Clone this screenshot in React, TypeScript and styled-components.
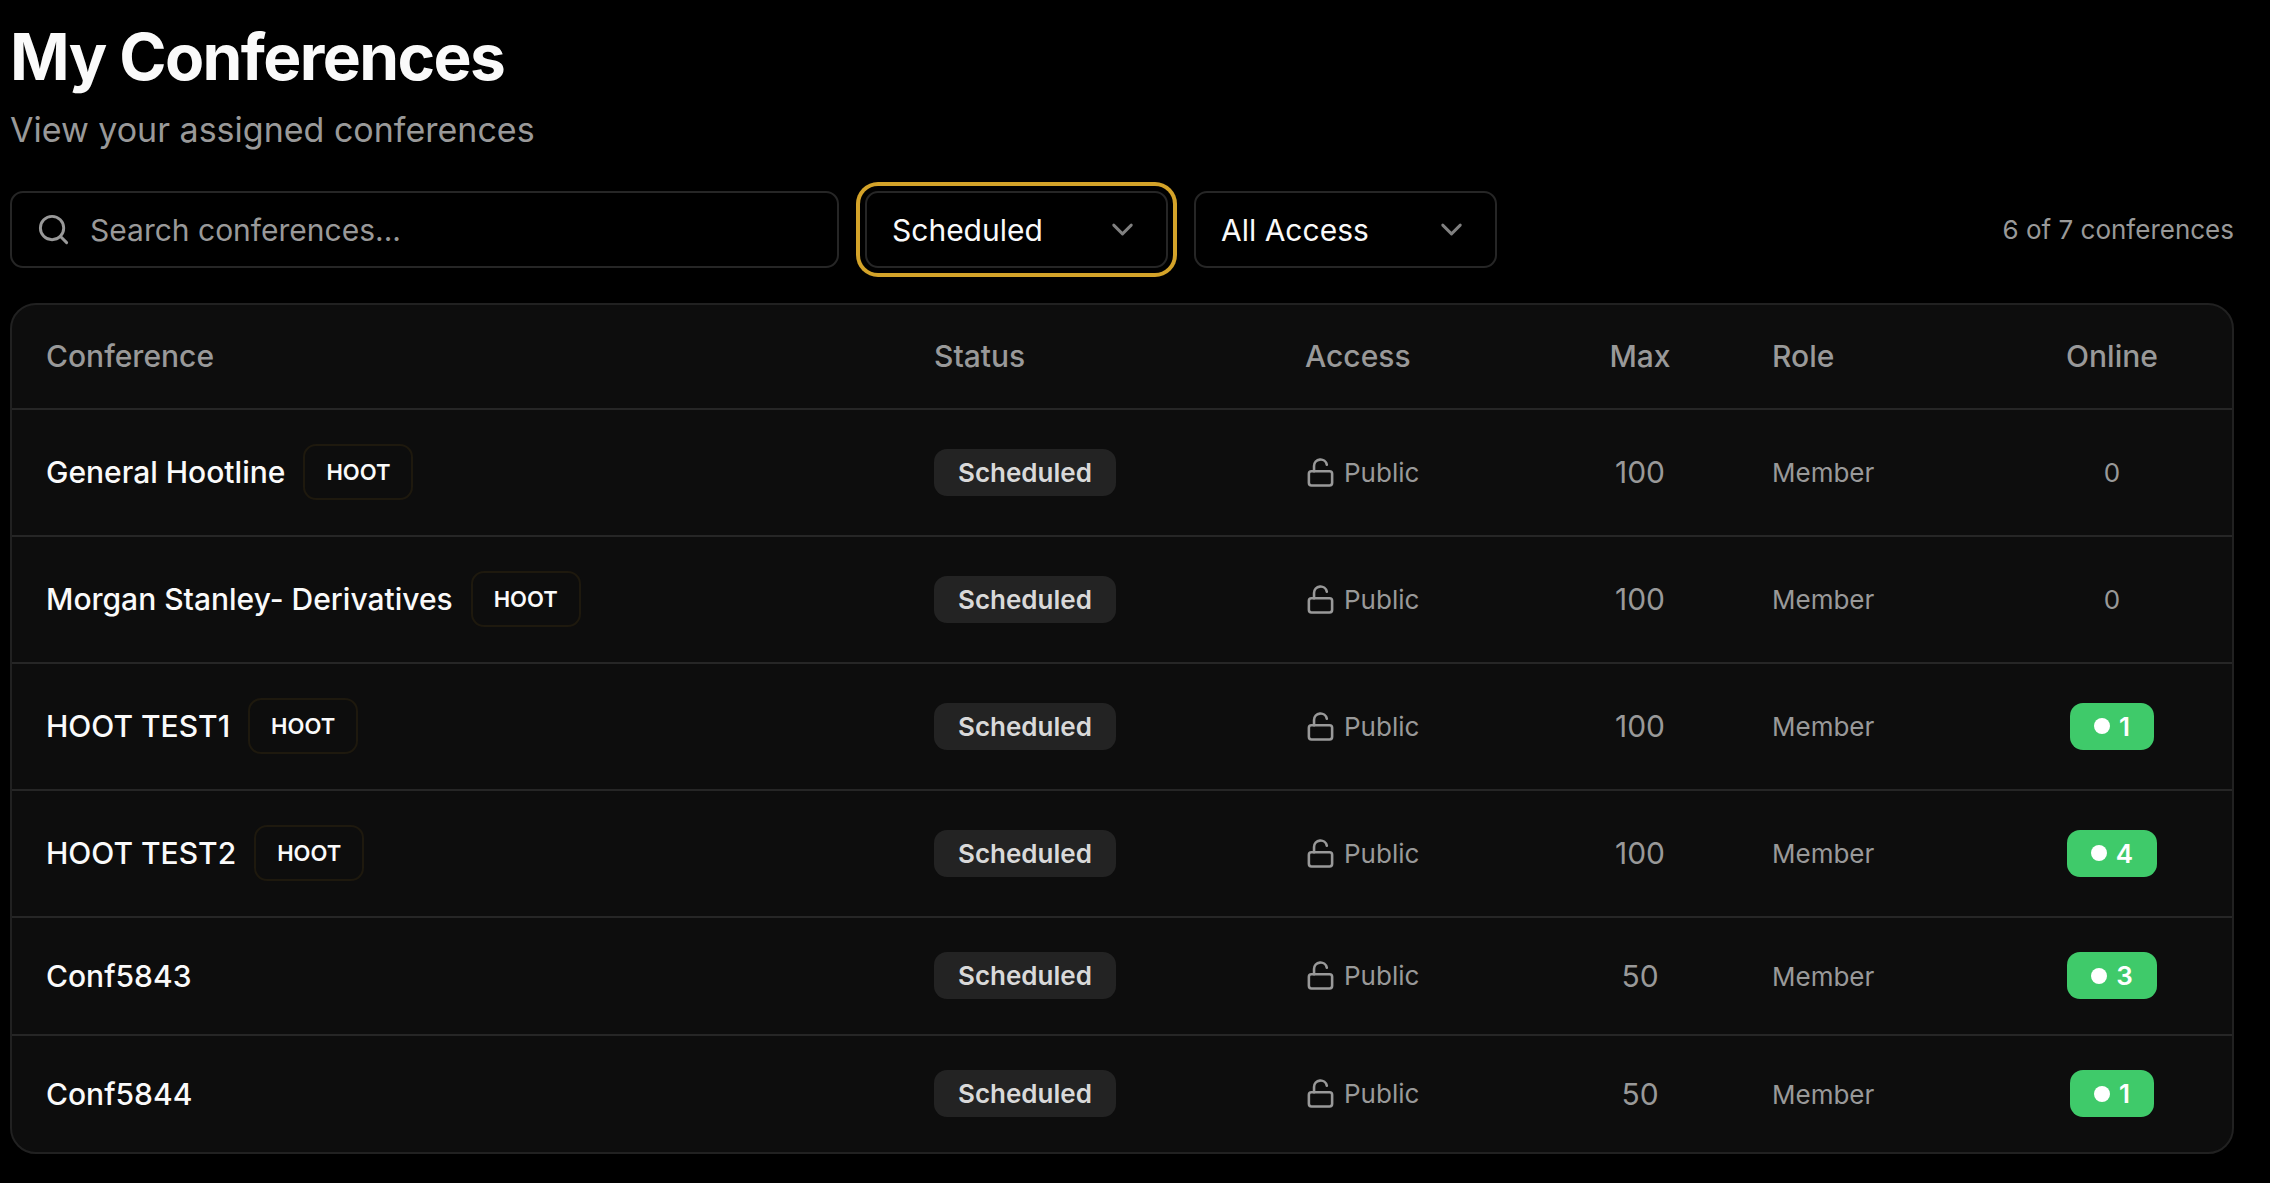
import React, { useState } from "react";
import styled, { createGlobalStyle, css } from "styled-components";
import { ChevronDown, LockOpen, Search } from "lucide-react";

const color = {
  page: "#000000",
  card: "#0d0d0d",
  border: "#262626",
  cardBorder: "#212121",
  text: "#fafafa",
  muted: "#999999",
  badge: "#232323",
  badgeText: "#d9d9d9",
  green: "#3fca6a",
  gold: "#d4a329",
};

const GlobalStyle = createGlobalStyle`
  *, *::before, *::after { box-sizing: border-box; }
  body {
    margin: 0;
    background: ${color.page};
    color: ${color.text};
    font-family: Inter, "Liberation Sans", sans-serif;
    font-size: 30px;
    line-height: 44px;
  }
`;

const Page = styled.main`
  display: flex;
  flex-direction: column;
  gap: 35px;
  padding: 18px 36px 28px 10px;
`;

const Header = styled.header`
  display: flex;
  flex-direction: column;
  gap: 8px;
`;

const Title = styled.h1`
  margin: 0;
  font-size: 64px;
  line-height: 78px;
  font-weight: 700;
  letter-spacing: -0.025em;
`;

const Subtitle = styled.p`
  margin: 0;
  font-size: 34px;
  line-height: 52px;
  color: ${color.muted};
`;

const Toolbar = styled.div`
  display: flex;
  align-items: center;
  gap: 26px;
`;

const field = css`
  width: 100%;
  height: 77px;
  border: 2px solid ${color.border};
  border-radius: 13px;
  background: ${color.page};
  font-family: inherit;
  font-size: 30px;
  line-height: 44px;
  outline: none;
`;

const SearchField = styled.label`
  position: relative;
  display: flex;
  flex: 0 1 829px;
  svg {
    position: absolute;
    left: 26px;
    top: 21px;
    color: ${color.muted};
  }
`;

const SearchInput = styled.input`
  ${field}
  padding: 0 26px 0 78px;
  color: ${color.text};
  &::placeholder {
    color: ${color.muted};
    opacity: 1;
  }
`;

const SelectField = styled.label`
  position: relative;
  display: flex;
  flex: 0 0 303px;
  svg {
    position: absolute;
    right: 28px;
    top: 21px;
    color: #808080;
    pointer-events: none;
  }
`;

const Select = styled.select<{ $active?: boolean }>`
  ${field}
  appearance: none;
  padding: 0 64px 0 25px;
  color: ${color.text};
  ${(p) => p.$active && `box-shadow: 0 0 0 5px ${color.page}, 0 0 0 9px ${color.gold};`}
`;

const Count = styled.span`
  margin-left: auto;
  font-size: 26px;
  line-height: 35px;
  color: ${color.muted};
`;

const Card = styled.section`
  border: 2px solid ${color.cardBorder};
  border-radius: 26px;
  background: ${color.card};
  overflow: hidden;
`;

const Table = styled.table`
  width: 100%;
  table-layout: fixed;
  border-collapse: separate;
  border-spacing: 0;
`;

const Col = styled.col<{ $width?: number }>`
  width: ${(p) => (p.$width ? `${p.$width}px` : "auto")};
`;

const Th = styled.th<{ $center?: boolean }>`
  padding: 29px 34px 30px;
  border-bottom: 2px solid ${color.border};
  font-weight: 500;
  text-align: ${(p) => (p.$center ? "center" : "left")};
  color: ${color.muted};
`;

const Td = styled.td<{ $center?: boolean }>`
  padding: 34px 34px 35px;
  border-bottom: 2px solid ${color.border};
  vertical-align: middle;
  text-align: ${(p) => (p.$center ? "center" : "left")};
  color: ${color.muted};
  tr:last-child > & {
    border-bottom: 0;
  }
`;

const NameCell = styled.div`
  display: flex;
  align-items: center;
  gap: 18px;
  font-weight: 500;
  color: ${color.text};
`;

const Small = styled.span`
  font-size: 26px;
`;

const Tag = styled.span`
  padding: 10px 21px;
  border: 2px solid #1e190e;
  border-radius: 13px;
  font-size: 22px;
  line-height: 32px;
  font-weight: 600;
`;

const Badge = styled.span<{ $live?: boolean }>`
  display: inline-flex;
  align-items: center;
  gap: 9px;
  padding: 6px 24px;
  border-radius: 13px;
  font-size: 26px;
  line-height: 35px;
  font-weight: 600;
  vertical-align: top;
  background: ${(p) => (p.$live ? color.green : color.badge)};
  color: ${(p) => (p.$live ? "#ffffff" : color.badgeText)};
`;

const Dot = styled.span`
  width: 16px;
  height: 16px;
  border-radius: 50%;
  background: #ffffff;
`;

const Access = styled.div`
  display: flex;
  align-items: center;
  gap: 8px;
  font-size: 26px;
  line-height: 35px;
`;

interface Conference {
  name: string;
  hoot: boolean;
  max: number;
  online: number;
}

const conferences: Conference[] = [
  { name: "General Hootline", hoot: true, max: 100, online: 0 },
  { name: "Morgan Stanley- Derivatives", hoot: true, max: 100, online: 0 },
  { name: "HOOT TEST1", hoot: true, max: 100, online: 1 },
  { name: "HOOT TEST2", hoot: true, max: 100, online: 4 },
  { name: "Conf5843", hoot: false, max: 50, online: 3 },
  { name: "Conf5844", hoot: false, max: 50, online: 1 },
];

function ConferenceRow({ conference }: { conference: Conference }) {
  const { name, hoot, max, online } = conference;
  return (
    <tr>
      <Td>
        <NameCell>
          {name}
          {hoot && <Tag>HOOT</Tag>}
        </NameCell>
      </Td>
      <Td>
        <Badge>Scheduled</Badge>
      </Td>
      <Td>
        <Access>
          <LockOpen size={31} aria-hidden />
          Public
        </Access>
      </Td>
      <Td $center>{max}</Td>
      <Td>
        <Small>Member</Small>
      </Td>
      <Td $center>
        {online > 0 ? (
          <Badge $live>
            <Dot />
            {online}
          </Badge>
        ) : (
          <Small>0</Small>
        )}
      </Td>
    </tr>
  );
}

export default function App() {
  const [query, setQuery] = useState("");
  const rows = conferences.filter((c) => c.name.toLowerCase().includes(query.toLowerCase()));

  return (
    <>
      <GlobalStyle />
      <Page>
        <Header>
          <Title>My Conferences</Title>
          <Subtitle>View your assigned conferences</Subtitle>
        </Header>
        <Toolbar>
          <SearchField>
            <Search size={35} aria-hidden />
            <SearchInput
              type="text"
              aria-label="Search conferences"
              placeholder="Search conferences..."
              value={query}
              onChange={(e) => setQuery(e.target.value)}
            />
          </SearchField>
          <SelectField>
            <Select $active aria-label="Status" defaultValue="Scheduled">
              <option>Scheduled</option>
            </Select>
            <ChevronDown size={35} aria-hidden />
          </SelectField>
          <SelectField>
            <Select aria-label="Access" defaultValue="All Access">
              <option>All Access</option>
            </Select>
            <ChevronDown size={35} aria-hidden />
          </SelectField>
          <Count>{rows.length} of 7 conferences</Count>
        </Toolbar>
        <Card>
          <Table>
            <colgroup>
              <Col />
              <Col $width={371} />
              <Col $width={271} />
              <Col $width={196} />
              <Col $width={254} />
              <Col $width={240} />
            </colgroup>
            <thead>
              <tr>
                <Th>Conference</Th>
                <Th>Status</Th>
                <Th>Access</Th>
                <Th $center>Max</Th>
                <Th>Role</Th>
                <Th $center>Online</Th>
              </tr>
            </thead>
            <tbody>
              {rows.map((c) => (
                <ConferenceRow key={c.name} conference={c} />
              ))}
            </tbody>
          </Table>
        </Card>
      </Page>
    </>
  );
}
